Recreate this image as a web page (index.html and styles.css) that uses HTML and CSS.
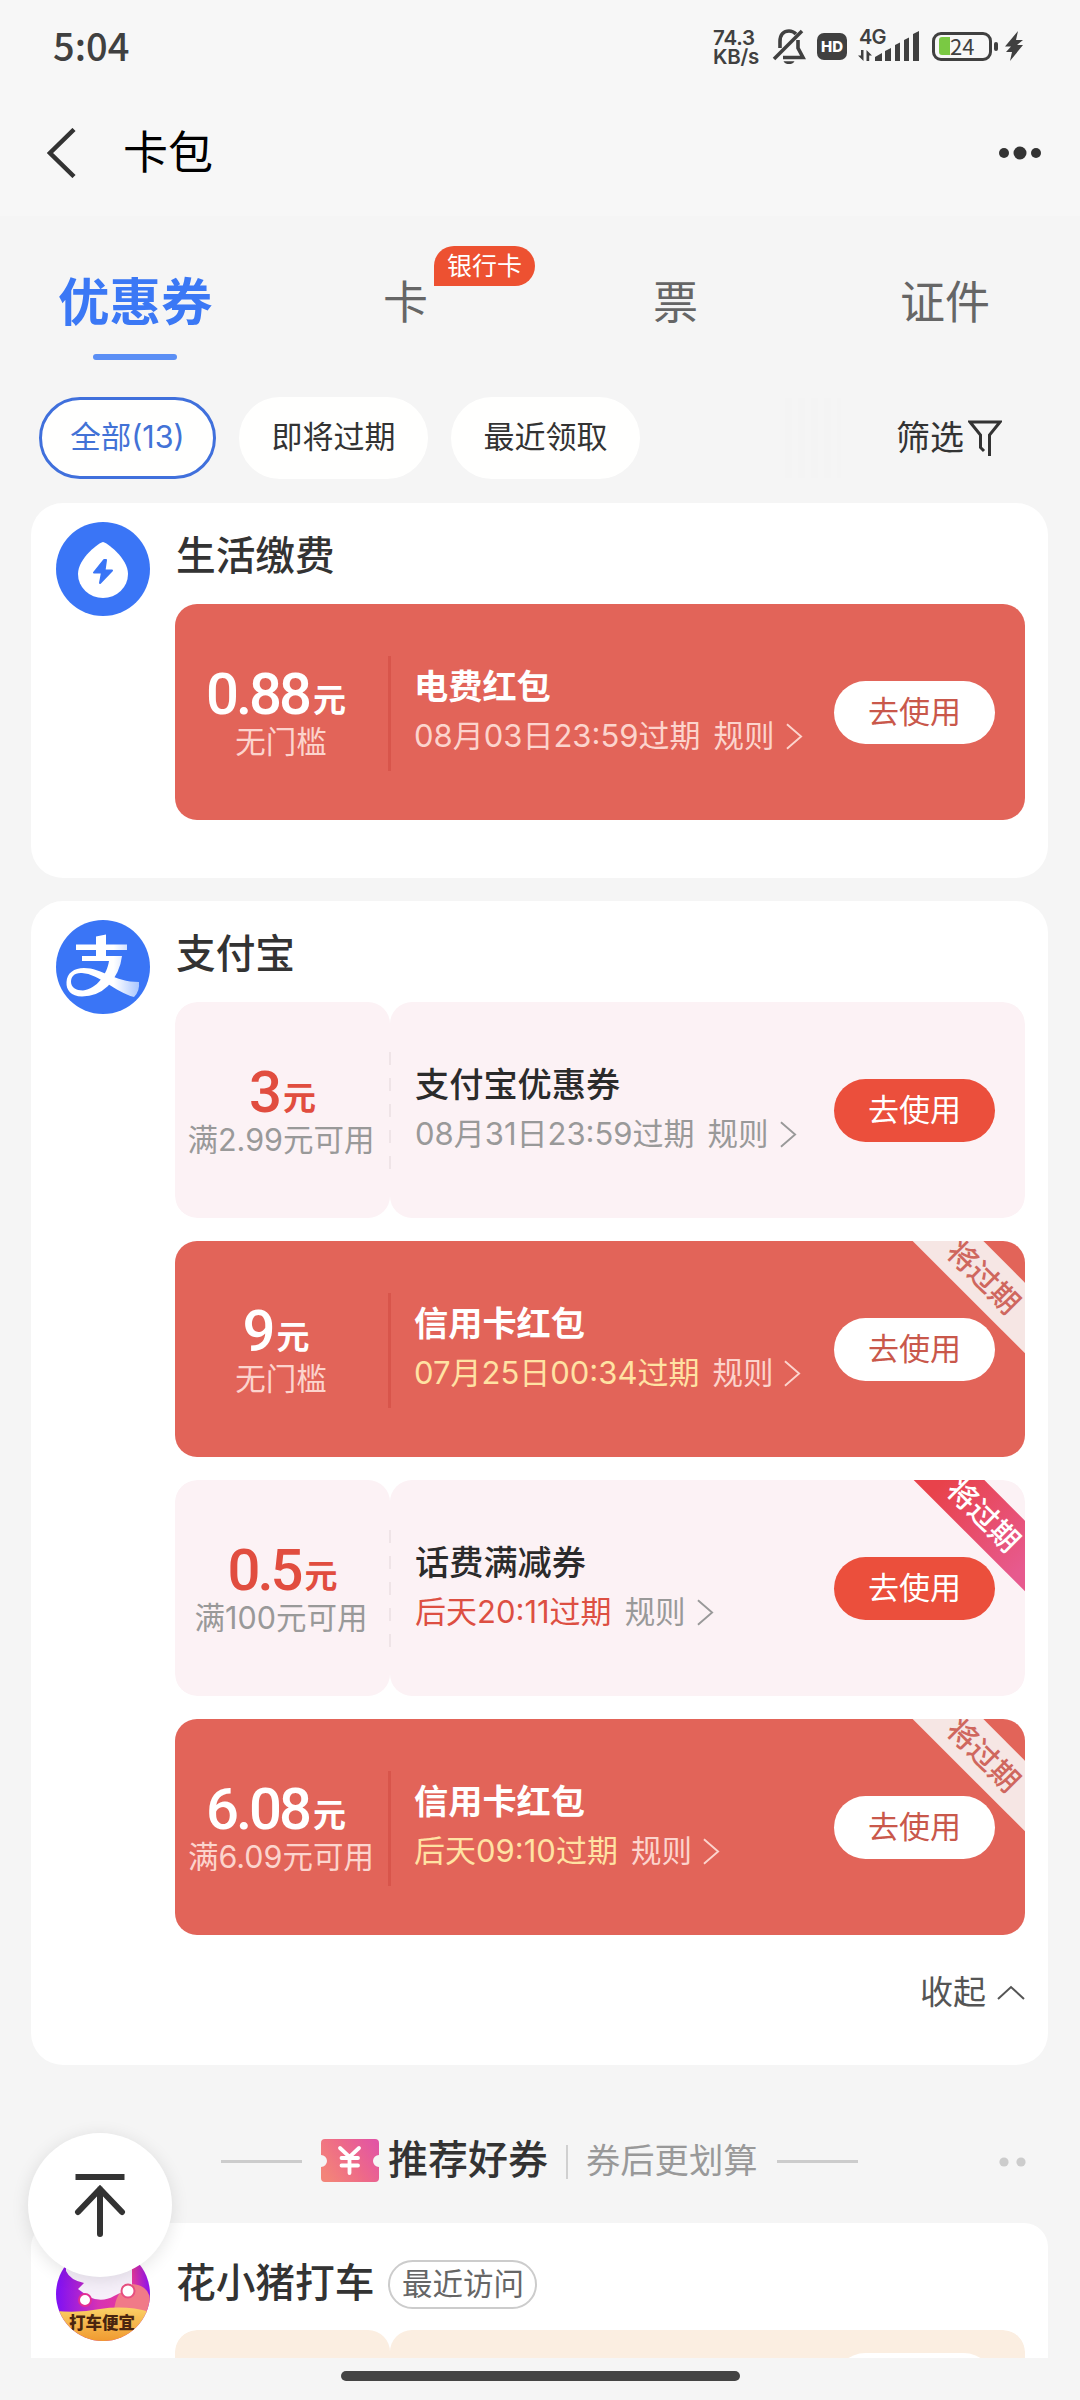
FILE: index.html
```html
<!DOCTYPE html>
<html lang="zh-CN">
<head>
<meta charset="utf-8">
<title>卡包</title>
<link rel="stylesheet" href="styles.css">
</head>
<body>
<div class="screen">
  <header class="top">
    <div class="status">
      <span class="clock">5:04</span>
      <div class="status-icons">
        <span class="speed"><span>74.3</span><span>KB/s</span></span>
        <svg class="bell" width="34" height="36" viewBox="0 0 34 36" fill="none" stroke="#404040" stroke-width="3.6">
          <path d="M8 20V13.500C8 6 12 3 17 3C20 3 22 4 24 6"/>
          <path d="M26 12V20L31 29.500H11"/>
          <path d="M2 31L30 3"/>
          <path d="M11.500 33.200H22.500C21 35.500 19.500 36 17 36S13 35.500 11.500 33.200Z" fill="#404040" stroke="none"/>
        </svg>
        <span class="hd">HD</span>
        <span class="signal">
          <span class="net">4G</span>
          <svg width="62" height="30" viewBox="0 0 62 30" fill="#404040">
            <path d="M3 19h2.500v11L0 24.500h3zM8.500 30V19l5.500 5.500h-2.800V30z"/>
            <path d="M17 30V26l7-4v8zM27 30V20l6-3v13zM37 30V14l5-2.500V30zM46 30V9l5-2.500V30zM55 30V3l6-3v30z"/>
          </svg>
        </span>
        <span class="battery"><i class="charge"></i><b>24</b></span>
        <svg class="bolt" width="18" height="30" viewBox="0 0 18 30" fill="#404040"><path d="M13 0L0 15.500h6L1 21h6L5 30L18 14h-6l6-5h-7z"/></svg>
      </div>
    </div>
    <div class="titlebar">
      <svg class="back" width="30" height="50" viewBox="0 0 30 50" fill="none" stroke="#333" stroke-width="4.500"><path d="M27 1.500L3 25L27 48.500"/></svg>
      <h1>卡包</h1>
      <svg class="more" width="44" height="14" viewBox="0 0 44 14" fill="#333"><circle cx="6" cy="7" r="5"/><circle cx="22" cy="7" r="6.500"/><circle cx="38" cy="7" r="5"/></svg>
    </div>
  </header>

  <nav class="tabs">
    <span class="tab active">优惠券</span>
    <span class="tab">卡<em>银行卡</em></span>
    <span class="tab">票</span>
    <span class="tab">证件</span>
  </nav>

  <div class="filters">
    <span class="chip on">全部(13)</span>
    <span class="chip">即将过期</span>
    <span class="chip">最近领取</span>
    <span class="fade"></span>
    <span class="sift">筛选<svg width="34" height="38" viewBox="0 0 34 38" fill="none" stroke="#333" stroke-width="3"><path d="M16 32L12.500 28.500V16L2 3H32L21.500 16V37"/></svg></span>
  </div>

  <section class="group">
    <svg class="logo" viewBox="0 0 94 94">
      <circle cx="47" cy="47" r="47" fill="#3a75f6"/>
      <path d="M47 20C44 20 22 36 22 52A25 24 0 0 0 72 52C72 36 50 20 47 20Z" fill="#fff"/>
      <path d="M48 38L38 50.500H46L44 61L56 48.500H48.500L50 38Z" fill="#3a75f6" stroke="#3a75f6" stroke-width="2" stroke-linejoin="round"/>
    </svg>
    <div class="body">
      <h2>生活缴费</h2>
      <article class="coupon red">
        <div class="worth"><p class="sum"><b>0.88</b><span>元</span></p><p class="cond">无门槛</p></div>
        <div class="detail">
          <h3>电费红包</h3>
          <p class="date">08月03日23:59过期<span class="rule">规则<svg viewBox="0 0 18 28"><path d="M1 1L16 14L1 27"/></svg></span></p>
        </div>
        <span class="use">去使用</span>
      </article>
    </div>
  </section>

  <section class="group">
    <svg class="logo" viewBox="0 0 94 94">
      <defs><linearGradient id="tail" x1="0" y1="0" x2="1" y2="0"><stop offset="0" stop-color="#fff"/><stop offset=".65" stop-color="#fff"/><stop offset="1" stop-color="#a9c6ff"/></linearGradient></defs>
      <circle cx="47" cy="47" r="47" fill="#3a75f6"/>
      <path d="M20 24.500H40V16.500L50 14.500V24.500H71V30H50V36H66Q64 53 52 66Q41 76.500 26 76.500C15 76.500 10 70 10.500 62C11 53 18 48 28 48C46 48 58 62 83 62Q84 71 78 77C59 72 43 54 26 53C18 52.500 15 57 15 62C15 67 20 70.500 27 70.500C41 69 51 54 53 41H26V36H40V30H20Z" fill="url(#tail)"/>
    </svg>
    <div class="body">
      <h2>支付宝</h2>
      <article class="coupon pink">
        <div class="worth"><p class="sum"><b>3</b><span>元</span></p><p class="cond">满2.99元可用</p></div>
        <div class="detail">
          <h3>支付宝优惠券</h3>
          <p class="date">08月31日23:59过期<span class="rule">规则<svg viewBox="0 0 18 28"><path d="M1 1L16 14L1 27"/></svg></span></p>
        </div>
        <span class="use">去使用</span>
      </article>
      <article class="coupon red">
        <div class="worth"><p class="sum"><b>9</b><span>元</span></p><p class="cond">无门槛</p></div>
        <div class="detail">
          <h3>信用卡红包</h3>
          <p class="date soon">07月25日00:34过期<span class="rule">规则<svg viewBox="0 0 18 28"><path d="M1 1L16 14L1 27"/></svg></span></p>
        </div>
        <span class="use">去使用</span>
        <span class="ribbon">将过期</span>
      </article>
      <article class="coupon pink">
        <div class="worth"><p class="sum"><b>0.5</b><span>元</span></p><p class="cond">满100元可用</p></div>
        <div class="detail">
          <h3>话费满减券</h3>
          <p class="date soon">后天20:11过期<span class="rule">规则<svg viewBox="0 0 18 28"><path d="M1 1L16 14L1 27"/></svg></span></p>
        </div>
        <span class="use">去使用</span>
        <span class="ribbon">将过期</span>
      </article>
      <article class="coupon red">
        <div class="worth"><p class="sum"><b>6.08</b><span>元</span></p><p class="cond">满6.09元可用</p></div>
        <div class="detail">
          <h3>信用卡红包</h3>
          <p class="date soon">后天09:10过期<span class="rule">规则<svg viewBox="0 0 18 28"><path d="M1 1L16 14L1 27"/></svg></span></p>
        </div>
        <span class="use">去使用</span>
        <span class="ribbon">将过期</span>
      </article>
      <p class="collapse">收起<svg width="28" height="15" viewBox="0 0 28 15" fill="none" stroke="#555" stroke-width="2"><path d="M1 14L14 2L27 14"/></svg></p>
    </div>
  </section>

  <div class="recommend">
    <i class="rule-line"></i>
    <svg class="ticket" width="58" height="43" viewBox="0 0 58 43">
      <defs><linearGradient id="tk" x1="0" y1=".7" x2="1" y2=".2"><stop offset="0" stop-color="#f38479"/><stop offset=".5" stop-color="#ee6a88"/><stop offset="1" stop-color="#e255a4"/></linearGradient></defs>
      <path d="M4 0H54Q58 0 58 4V16A6 6 0 0 0 58 28V39Q58 43 54 43H4Q0 43 0 39V28A6 6 0 0 0 0 16V4Q0 0 4 0Z" fill="url(#tk)"/>
      <path d="M19 9L28.500 18L38 9M20.500 19H37M20.500 26.500H37M28.500 18V34" fill="none" stroke="#fff" stroke-width="3.800" stroke-linecap="round"/>
    </svg>
    <strong>推荐好券</strong>
    <i class="bar"></i>
    <span class="sub">券后更划算</span>
    <i class="rule-line"></i>
    <svg class="dots" width="28" height="10" viewBox="0 0 28 10" fill="#ccc"><circle cx="5" cy="5" r="4.600"/><circle cx="22" cy="5" r="4.600"/></svg>
  </div>

  <section class="group last">
    <svg class="logo" viewBox="0 0 94 94">
      <defs>
        <clipPath id="disc"><circle cx="47" cy="47" r="47"/></clipPath>
        <linearGradient id="pig" x1="0" y1="0" x2="1" y2="0"><stop offset="0" stop-color="#7d10f5"/><stop offset=".45" stop-color="#d632b4"/><stop offset=".8" stop-color="#e93a98"/><stop offset="1" stop-color="#8a10ee"/></linearGradient>
        <linearGradient id="gold" x1="0" y1="0" x2="0" y2="1"><stop offset="0" stop-color="#fbd066"/><stop offset="1" stop-color="#f09a30"/></linearGradient>
      </defs>
      <g clip-path="url(#disc)">
        <rect width="94" height="94" fill="url(#pig)"/>
        <path d="M58 64Q60 42 76 37Q92 38 94 52V66H58Z" fill="#f07a88"/>
        <path d="M10 14H76V40L58 49Q46 56 33 50L22 42L28 36Q14 33 10 24Z" fill="#f6f0fa"/>
        <circle cx="29" cy="53" r="6" fill="#fff" stroke="#e32e94" stroke-width="2"/>
        <circle cx="72" cy="44" r="6.500" fill="#fff" stroke="#e84f80" stroke-width="2"/>
        <path d="M0 64Q24 66 44 62Q70 58 94 65V94H0Z" fill="url(#gold)"/>
        <text x="46" y="82" text-anchor="middle" class="slogan">打车便宜</text>
      </g>
    </svg>
    <div class="body">
      <h2>花小猪打车<span class="tag">最近访问</span></h2>
      <article class="coupon peach">
        <div class="worth"></div>
        <div class="detail"></div>
        <span class="use"></span>
      </article>
    </div>
  </section>

  <footer class="gesture"><i></i></footer>

  <span class="to-top">
    <svg width="52" height="66" viewBox="0 0 52 66" fill="none" stroke="#333" stroke-width="6" stroke-linecap="round"><path d="M1.500 5H50.500" stroke-linecap="butt"/><path d="M4 40L26 17L48 40M26 17V62"/></svg>
  </span>
</div>
</body>
</html>
```

FILE: styles.css
```css
* { box-sizing: border-box; margin: 0; padding: 0; }
i, em { font-style: normal; }

body {
  background: #f5f5f5;
  color: #333;
  font-family: Inter, "Noto Sans CJK SC", sans-serif;
}

.screen {
  position: relative;
  width: 1080px;
  height: 2400px;
  overflow: hidden;
  display: flex;
  flex-direction: column;
}

/* status bar and title */
.top { height: 216px; flex: none; background: #f7f7f7; }
.status {
  height: 92px;
  padding: 0 57px 0 53px;
  display: flex;
  align-items: center;
  justify-content: space-between;
  color: #404040;
}
.clock { font: 500 38px/44px "Noto Sans CJK SC", sans-serif; margin-bottom: 3px; }
.status-icons { display: flex; align-items: center; }
.speed {
  display: flex;
  flex-direction: column;
  width: 59px;
  font: 600 20.500px/18.500px Inter, sans-serif;
  letter-spacing: -.2px;
  margin-top: 3px;
}
.bell { margin-right: 11px; }
.hd {
  width: 30px;
  height: 27px;
  border-radius: 7px;
  background: #404040;
  color: #fff;
  font: 800 15px/27px Inter, sans-serif;
  text-align: center;
  margin-right: 11px;
}
.signal { position: relative; height: 30px; margin-right: 12px; }
.signal svg { display: block; }
.net { position: absolute; left: 1px; top: -1px; font: 600 20px/14px Inter, sans-serif; letter-spacing: -.8px; }
.battery {
  position: relative;
  width: 60px;
  height: 29px;
  border: 3px solid #404040;
  border-radius: 9px;
  margin-right: 13px;
  display: flex;
  align-items: center;
  padding-left: 4px;
}
.battery::after {
  content: "";
  position: absolute;
  right: -9px;
  top: 7px;
  width: 4px;
  height: 9px;
  border-radius: 2px;
  background: #404040;
}
.charge { width: 11px; height: 18px; background: #7ac943; border-radius: 3px 0 0 3px; }
.battery b { font: 400 22px/22px "Noto Sans CJK SC", sans-serif; margin-top: -2px; }

.titlebar { height: 124px; padding: 0 38px 2px 47px; display: flex; align-items: center; }
h1 { font-size: 45px; line-height: 60px; font-weight: 400; color: #000; margin-left: 46px; }
.more { margin-left: auto; }

/* tabs */
.tabs { height: 181px; flex: none; padding: 0 88px 0 58px; display: flex; font-size: 45px; color: #666; }
.tab { position: relative; line-height: 60px; padding-top: 57px; }
.tab:nth-child(1) { width: 325px; }
.tab:nth-child(2) { width: 270px; }
.tab:nth-child(3) { width: 247px; }
.tab.active { font-size: 51.500px; font-weight: 700; color: #3b78f5; padding-top: 56px; }
.tab.active::after {
  content: "";
  position: absolute;
  left: 35px;
  top: 138px;
  width: 84px;
  height: 6px;
  border-radius: 3px;
  background: #5b8ff5;
}
.tab em {
  position: absolute;
  left: 51px;
  top: 30px;
  width: 101px;
  height: 40px;
  border-radius: 20px 20px 20px 0;
  background: #ed5131;
  color: #fff;
  font-size: 25px;
  line-height: 40px;
  text-align: center;
}

/* filter chips */
.filters { height: 82px; flex: none; margin: 0 78px 24px 39px; display: flex; gap: 23px; align-items: center; }
.chip {
  width: 189px;
  height: 82px;
  border-radius: 41px;
  background: #fffffe;
  font-size: 31px;
  line-height: 80px;
  text-align: center;
}
.chip.on { width: 177px; border: 3px solid #4070dc; color: #4272d6; font-size: 30.500px; line-height: 74px; }
.fade {
  width: 56px;
  height: 80px;
  margin-left: 122px;
  background: repeating-linear-gradient(90deg, #f4f4f4 0 7px, #f5f5f5 7px 13px);
}
.sift { margin-left: auto; display: flex; align-items: center; gap: 4px; font-size: 34px; line-height: 48px; }

/* coupon groups */
.group {
  width: 1017px;
  flex: none;
  margin: 0 0 23px 31px;
  padding: 18px 23px 58px 25px;
  border-radius: 32px;
  background: #fff;
  display: flex;
  gap: 25px;
}
.logo { width: 94px; height: 94px; flex: none; margin-top: 1px; }
.body { width: 850px; }
h2 { height: 83px; padding-left: 1px; font-size: 39.700px; line-height: 71px; font-weight: 500; display: flex; }

.coupon { position: relative; height: 216px; border-radius: 22px; overflow: hidden; display: flex; }
.coupon + .coupon { margin-top: 23px; }
.worth {
  width: 215px;
  height: 216px;
  padding: 59px 0 0 0;
  text-align: center;
  white-space: nowrap;
}
.sum { height: 59px; display: flex; justify-content: center; align-items: baseline; font-size: 33px; line-height: 62px; font-weight: 600; gap: 4px; }
.sum b { font: 500 58px/62px Roboto, sans-serif; letter-spacing: -3px; }
.sum span { position: relative; top: -2px; }
.cond { height: 40px; font-size: 30.500px; line-height: 40px; padding-right: 3px; }
.detail { width: 635px; height: 216px; padding: 60px 0 0 24px; white-space: nowrap; }
h3 { height: 48px; font-size: 34.200px; line-height: 46px; font-weight: 500; }
.date { display: flex; align-items: center; height: 48px; font-size: 31px; line-height: 48px; }
.rule { display: flex; align-items: center; gap: 11px; margin-left: 13px; font-size: 30.500px; }
.rule svg { width: 17px; height: 27px; fill: none; stroke: currentColor; stroke-width: 2; }
.use {
  position: absolute;
  right: 30px;
  top: 77px;
  width: 161px;
  height: 63px;
  border-radius: 32px;
  font-size: 31px;
  line-height: 62px;
  text-align: center;
}

.red { background: #e26459; color: #fff; }
.red .sum { padding-right: 13px; }
.red h3 { font-weight: 600; }
.red .cond, .red .date, .red .rule { color: #fcd4cd; }
.red .date.soon { color: #ffe2a3; }
.red .use { background: #fff; color: #c9584b; }
.red .detail::before {
  content: "";
  position: absolute;
  left: 213px;
  top: 52px;
  width: 3px;
  height: 115px;
  background: #d8554b;
}

.pink .worth, .pink .detail { background: #fcf2f5; border-radius: 22px; }
.pink .detail, .peach .detail { padding-left: 25px; }
.pink .sum { color: #e14d3f; }
.pink .cond, .pink .date, .pink .rule { color: #999; }
.pink h3 { color: #2b2b2b; }
.pink .date.soon { color: #dd4f42; }
.pink .use { background: #eb4f3c; color: #fff; }
.pink .detail::before {
  content: "";
  position: absolute;
  left: 214px;
  top: 50px;
  width: 2px;
  height: 117px;
  background: repeating-linear-gradient(#efe4e7 0 13px, transparent 13px 26px);
}

.ribbon {
  position: absolute;
  left: 720px;
  top: 12px;
  width: 180px;
  height: 50px;
  transform: rotate(45deg);
  background: #f6e6e4;
  color: #cf675e;
  font-size: 29.500px;
  line-height: 50px;
  padding-right: 3px;
  font-weight: 500;
  text-align: center;
}
.pink .ribbon { background: linear-gradient(90deg, #e8424b 20%, #e75a8e 85%); color: #fff; top: 11px; }

.collapse {
  display: flex;
  justify-content: flex-end;
  align-items: center;
  gap: 11px;
  height: 72px;
  margin-top: 21px;
  color: #555;
  font-size: 33px;
  line-height: 48px;
}
.group:has(.collapse) { padding-bottom: 37px; }

/* recommendation heading */
.recommend {
  height: 158px;
  flex: none;
  margin-top: -23px;
  padding: 35px 53px 0 221px;
  display: flex;
  align-items: center;
}
.rule-line { width: 81px; height: 3px; background: #ccc; }
.ticket { margin: -2px 9px 0 19px; }
.recommend strong { font-size: 40px; line-height: 60px; font-weight: 500; margin-top: -3px; }
.bar { width: 2px; height: 34px; background: #d0d0d0; margin: 0 18px; }
.sub { font-size: 34.300px; line-height: 50px; color: #999; margin: -2px 19px 0 0; }
.dots { margin-left: auto; }

.last { height: 135px; margin-bottom: 0; padding: 23px 23px 0 25px; border-radius: 24px 24px 0 0; overflow: hidden; }
.last h2 { height: 84px; align-items: center; line-height: 60px; padding-bottom: 11px; }
.tag {
  width: 149px;
  height: 49px;
  margin: 3px 0 0 14px;
  border: 2px solid #ccc;
  border-radius: 25px;
  color: #666;
  font-size: 30.500px;
  line-height: 43px;
  font-weight: 400;
  text-align: center;
}
.last .coupon { flex: none; }
.peach .worth, .peach .detail { background: #fbeee1; border-radius: 22px; flex: none; }
.peach .use { top: 23px; background: #fff; }
.slogan { font: 900 16.500px "Noto Sans CJK SC", sans-serif; fill: #4a2510; }

.gesture { height: 42px; flex: none; background: #f5f5f5; display: flex; justify-content: center; padding-top: 13px; }
.gesture i { width: 399px; height: 10px; border-radius: 5px; background: #444; }

.to-top {
  position: absolute;
  left: 28px;
  top: 2133px;
  width: 144px;
  height: 144px;
  border-radius: 50%;
  background: #fff;
  box-shadow: 0 3px 18px rgba(0, 0, 0, .11);
  display: flex;
  align-items: center;
  justify-content: center;
}
```
